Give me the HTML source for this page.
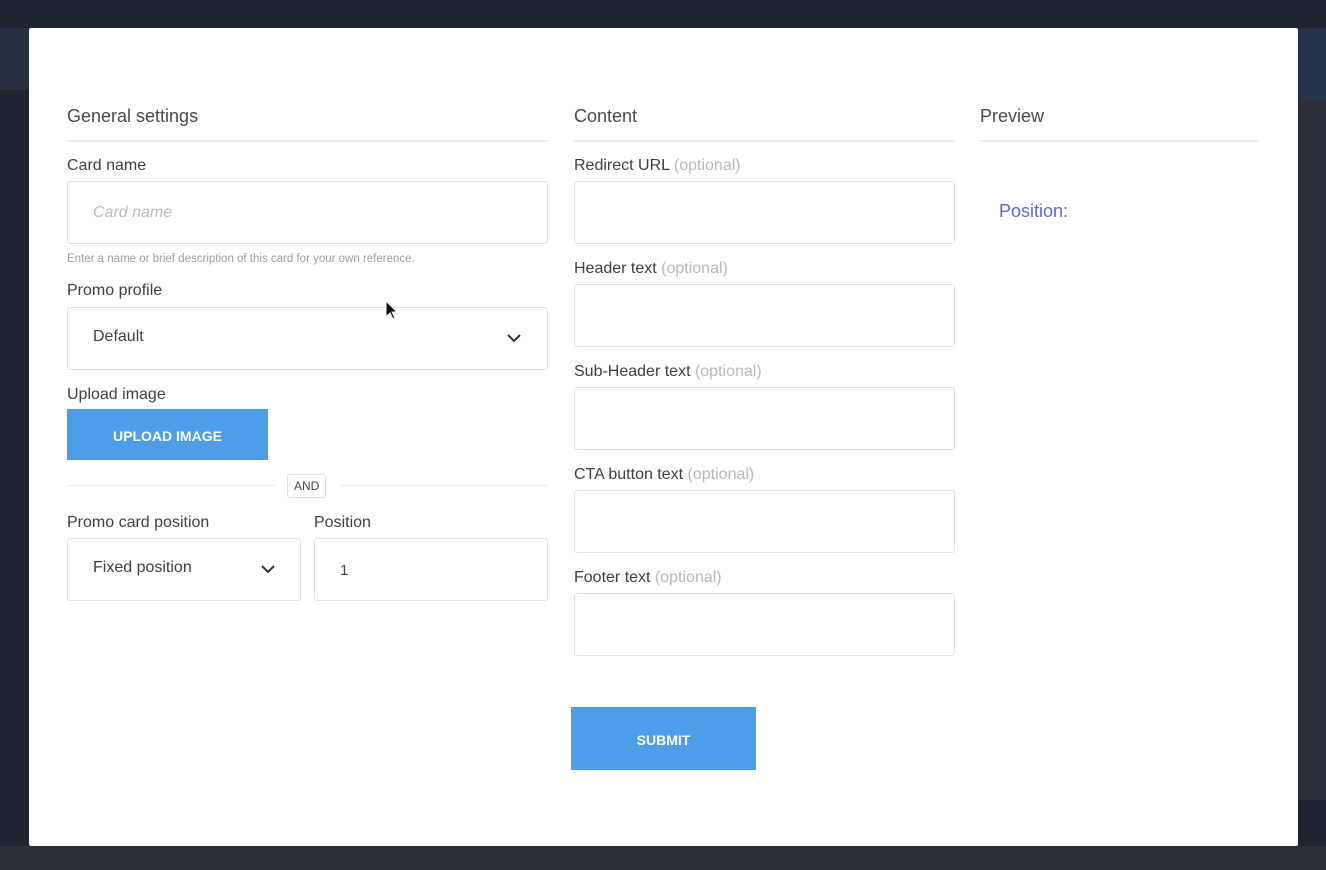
<!DOCTYPE html>
<html><head><style>
*{box-sizing:border-box;margin:0;padding:0}
body{width:1326px;height:870px;background:#1f2530;font-family:"Liberation Sans",sans-serif;position:relative;overflow:hidden;color:#3a3f47}
.bgl{position:absolute;left:0;top:28px;width:29px;height:62px;background:#24303f}
.bgr{position:absolute;left:1298px;top:28px;width:28px;height:72px;background:#26344a}
.bgr2{position:absolute;left:1298px;top:100px;width:28px;height:700px;background:#2b313b}
.bgb{position:absolute;left:0;top:846px;width:1326px;height:24px;background:#2a2f38}
.modal{position:absolute;left:29px;top:28px;width:1269px;height:818px;background:#fff;border-radius:2px}
.a{position:absolute}
h2{position:absolute;font-weight:normal;font-size:18px;color:#444a52}
.hr{position:absolute;height:2px;background:#ececee}
.lbl{position:absolute;font-size:16px;color:#3a3f47}
.opt{color:#b4b8bd}
.inp{position:absolute;border:1px solid #dfe1e4;border-radius:3px;height:63px;background:#fff;font-size:16px;color:#3a3f47}
.btn{position:absolute;background:#4d9de8;color:#fff;font-weight:bold;font-size:14px;text-align:center}
</style></head><body>
<div class="bgl"></div><div class="bgr"></div><div class="bgr2"></div><div class="bgb"></div>
<div class="modal"></div>

<h2 style="left:67px;top:106px">General settings</h2>
<div class="hr" style="left:67px;top:140px;width:481px"></div>
<div class="lbl" style="left:67px;top:157px">Card name</div>
<div class="inp" style="left:67px;top:181px;width:481px"><span class="a" style="left:25px;top:22px;font-style:italic;color:#b7bbc0">Card name</span></div>
<div class="a" style="left:67px;top:253px;font-size:11.5px;color:#9a9ea4">Enter a name or brief description of this card for your own reference.</div>
<div class="lbl" style="left:67px;top:282px">Promo profile</div>
<div class="inp" style="left:67px;top:307px;width:481px"><span class="a" style="left:25px;top:20px">Default</span>
<svg class="a" style="left:438px;top:24px" width="16" height="12" viewBox="0 0 16 12"><path d="M2 3l6 6 6-6" fill="none" stroke="#333" stroke-width="2"/></svg></div>
<div class="lbl" style="left:67px;top:386px">Upload image</div>
<div class="btn" style="left:67px;top:409px;width:201px;height:51px;line-height:54px">UPLOAD IMAGE</div>
<div class="hr" style="left:67px;top:485px;width:208px;height:1px"></div>
<div class="hr" style="left:340px;top:485px;width:208px;height:1px"></div>
<div class="a" style="left:287px;top:474px;border:1px solid #dfe1e4;border-radius:3px;font-size:12px;padding:4px 6px;color:#444">AND</div>
<div class="lbl" style="left:67px;top:514px">Promo card position</div>
<div class="lbl" style="left:314px;top:514px">Position</div>
<div class="inp" style="left:67px;top:538px;width:234px"><span class="a" style="left:25px;top:20px">Fixed position</span>
<svg class="a" style="left:192px;top:24px" width="16" height="12" viewBox="0 0 16 12"><path d="M2 3l6 6 6-6" fill="none" stroke="#333" stroke-width="2"/></svg></div>
<div class="inp" style="left:314px;top:538px;width:234px"><span class="a" style="left:25px;top:23px;font-size:15px">1</span></div>

<h2 style="left:574px;top:106px">Content</h2>
<div class="hr" style="left:574px;top:140px;width:381px"></div>
<div class="lbl" style="left:574px;top:157px">Redirect URL <span class="opt">(optional)</span></div>
<div class="inp" style="left:574px;top:181px;width:381px"></div>
<div class="lbl" style="left:574px;top:260px">Header text <span class="opt">(optional)</span></div>
<div class="inp" style="left:574px;top:284px;width:381px"></div>
<div class="lbl" style="left:574px;top:363px">Sub-Header text <span class="opt">(optional)</span></div>
<div class="inp" style="left:574px;top:387px;width:381px"></div>
<div class="lbl" style="left:574px;top:466px">CTA button text <span class="opt">(optional)</span></div>
<div class="inp" style="left:574px;top:490px;width:381px"></div>
<div class="lbl" style="left:574px;top:569px">Footer text <span class="opt">(optional)</span></div>
<div class="inp" style="left:574px;top:593px;width:381px"></div>
<div class="btn" style="left:571px;top:707px;width:185px;height:63px;line-height:66px">SUBMIT</div>

<h2 style="left:980px;top:106px">Preview</h2>
<div class="hr" style="left:980px;top:140px;width:278px"></div>
<div class="a" style="left:999px;top:201px;font-size:18px;color:#5b6acb">Position:</div>

<svg class="a" style="left:385px;top:300px" width="14" height="22" viewBox="0 0 14 22"><path d="M1 1v16l4-4 3 6 2-1-3-6h5z" fill="#111" stroke="#fff" stroke-width="1"/></svg>
</body></html>
